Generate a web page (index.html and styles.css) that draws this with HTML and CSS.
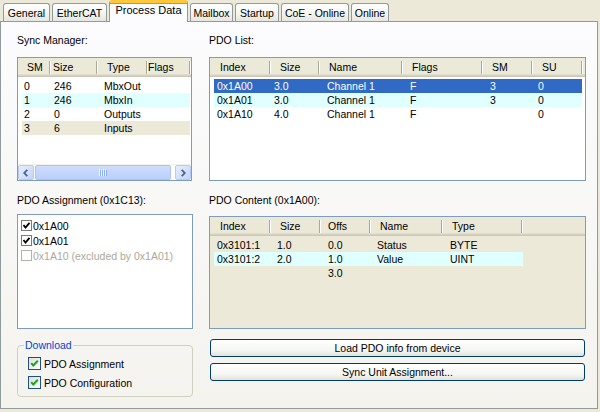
FILE: index.html
```html
<!DOCTYPE html>
<html>
<head>
<meta charset="utf-8">
<title>Process Data</title>
<link rel="stylesheet" href="styles.css">
</head>
<body>
<div class="window">
  <div class="tabs">
    <div class="tab w-general">General</div>
    <div class="tab w-ethercat">EtherCAT</div>
    <div class="tab active w-process">Process Data</div>
    <div class="tab w-mailbox">Mailbox</div>
    <div class="tab w-startup">Startup</div>
    <div class="tab w-coe">CoE - Online</div>
    <div class="tab w-online">Online</div>
  </div>
  <div class="panel">
    <div class="col col-left">
      <div class="label lbl-top">Sync Manager:</div>
      <div class="listbox sm">
        <div class="hdr">
          <div class="hc">SM</div><div class="hc">Size</div><div class="hc">Type</div><div class="hc">Flags</div>
        </div>
        <div class="rows">
          <div class="row"><span>0</span><span>246</span><span>MbxOut</span><span></span></div>
          <div class="row cyan"><span>1</span><span>246</span><span>MbxIn</span><span></span></div>
          <div class="row"><span>2</span><span>0</span><span>Outputs</span><span></span></div>
          <div class="row beige"><span>3</span><span>6</span><span>Inputs</span><span></span></div>
        </div>
        <div class="hscroll">
          <div class="sbtn">
            <svg width="16" height="16" viewBox="0 0 16 16"><path d="M9.5 4.5 L6 8 L9.5 11.5" fill="none" stroke="#4D6185" stroke-width="2"/></svg>
          </div>
          <div class="thumb">
            <svg width="8" height="7" viewBox="0 0 8 7"><path d="M0.5 0v7M2.5 0v7M4.5 0v7M6.5 0v7" stroke="#EEF3FE" stroke-width="1"/><path d="M1.5 1v7M3.5 1v7M5.5 1v7M7.5 1v7" stroke="#8CB0F8" stroke-width="1"/></svg>
          </div>
          <div class="track"></div>
          <div class="sbtn">
            <svg width="16" height="16" viewBox="0 0 16 16"><path d="M6.5 4.5 L10 8 L6.5 11.5" fill="none" stroke="#4D6185" stroke-width="2"/></svg>
          </div>
        </div>
      </div>

      <div class="label lbl-mid-left">PDO Assignment (0x1C13):</div>
      <div class="listbox assign">
        <div class="item">
          <svg class="lcb" width="11" height="11" viewBox="0 0 11 11"><rect x="0.5" y="0.5" width="10" height="10" fill="#fff" stroke="#7A7A7A"/><path d="M2.5 5 L4.5 7.5 L8.5 2.8" fill="none" stroke="#000" stroke-width="1.8"/></svg>
          <span>0x1A00</span>
        </div>
        <div class="item">
          <svg class="lcb" width="11" height="11" viewBox="0 0 11 11"><rect x="0.5" y="0.5" width="10" height="10" fill="#fff" stroke="#7A7A7A"/><path d="M2.5 5 L4.5 7.5 L8.5 2.8" fill="none" stroke="#000" stroke-width="1.8"/></svg>
          <span>0x1A01</span>
        </div>
        <div class="item disabled">
          <svg class="lcb" width="11" height="11" viewBox="0 0 11 11"><rect x="0.5" y="0.5" width="10" height="10" fill="#fff" stroke="#B5B2A6"/></svg>
          <span>0x1A10 (excluded by 0x1A01)</span>
        </div>
      </div>

      <fieldset class="group">
        <legend>Download</legend>
        <div class="chk first">
          <svg width="13" height="13" viewBox="0 0 13 13"><defs><linearGradient id="cbg" x1="0" y1="0" x2="1" y2="1"><stop offset="0" stop-color="#DCDCD7"/><stop offset="1" stop-color="#FFFFFF"/></linearGradient></defs><rect x="0.5" y="0.5" width="12" height="12" fill="url(#cbg)" stroke="#1C5180"/><path d="M3.2 6.2 L5.3 8.5 L9.8 3.8" fill="none" stroke="#21A121" stroke-width="2"/></svg>
          <span>PDO Assignment</span>
        </div>
        <div class="chk">
          <svg width="13" height="13" viewBox="0 0 13 13"><rect x="0.5" y="0.5" width="12" height="12" fill="url(#cbg)" stroke="#1C5180"/><path d="M3.2 6.2 L5.3 8.5 L9.8 3.8" fill="none" stroke="#21A121" stroke-width="2"/></svg>
          <span>PDO Configuration</span>
        </div>
      </fieldset>
    </div>

    <div class="col col-right">
      <div class="label lbl-top">PDO List:</div>
      <div class="listbox pdolist">
        <div class="hdr">
          <div class="hc">Index</div><div class="hc">Size</div><div class="hc">Name</div><div class="hc">Flags</div><div class="hc">SM</div><div class="hc">SU</div>
        </div>
        <div class="rows">
          <div class="row selected"><span>0x1A00</span><span>3.0</span><span>Channel 1</span><span>F</span><span>3</span><span>0</span></div>
          <div class="row cyan"><span>0x1A01</span><span>3.0</span><span>Channel 1</span><span>F</span><span>3</span><span>0</span></div>
          <div class="row"><span>0x1A10</span><span>4.0</span><span>Channel 1</span><span>F</span><span></span><span>0</span></div>
        </div>
      </div>

      <div class="label lbl-mid-right">PDO Content (0x1A00):</div>
      <div class="listbox content">
        <div class="hdr">
          <div class="hc">Index</div><div class="hc">Size</div><div class="hc">Offs</div><div class="hc">Name</div><div class="hc">Type</div>
        </div>
        <div class="rows">
          <div class="row"><span>0x3101:1</span><span>1.0</span><span>0.0</span><span>Status</span><span>BYTE</span></div>
          <div class="row cyan"><span>0x3101:2</span><span>2.0</span><span>1.0</span><span>Value</span><span>UINT</span></div>
          <div class="row"><span></span><span></span><span>3.0</span><span></span><span></span></div>
        </div>
      </div>

      <div class="buttons">
        <button class="btn">Load PDO info from device</button>
        <button class="btn">Sync Unit Assignment...</button>
      </div>
    </div>
  </div>
</div>
</body>
</html>
```

FILE: styles.css
```css
* { box-sizing: border-box; }

html, body {
  margin: 0;
  padding: 0;
}

body {
  width: 600px;
  height: 412px;
  overflow: hidden;
  background: #ECE9D8;
  font-family: "Liberation Sans", Arial, sans-serif;
  font-size: 10.5px;
  color: #000;
}

.window {
  width: 600px;
  height: 412px;
}

/* ---------- tabs ---------- */
.tabs {
  height: 21px;
  display: flex;
  align-items: flex-end;
  padding-left: 3px;
  gap: 2px;
  position: relative;
  z-index: 2;
}

.tab {
  height: 18px;
  border: 1px solid #919B9C;
  border-bottom: none;
  border-radius: 3px 3px 0 0;
  background: linear-gradient(#FFFFFF, #F3F3EF 60%, #E6E5DF);
  text-align: center;
  line-height: 18px;
  white-space: nowrap;
}

.tab.active {
  height: 22px;
  margin-bottom: -1px;
  border-top: 3px solid #FFC83C;
  box-shadow: inset 0 1px 0 #E68B2C;
  background: #FCFCFE;
  line-height: 15px;
  font-size: 11px;
}

.w-general { width: 47px; }
.w-ethercat { width: 55px; }
.w-process { width: 79px; }
.w-mailbox { width: 43px; }
.w-startup { width: 44px; }
.w-coe { width: 68px; }
.w-online { width: 38px; }

/* ---------- panel ---------- */
.panel {
  width: 598px;
  height: 388px;
  border: 1px solid #919B9C;
  background: linear-gradient(#FCFCFE, #F4F3EE);
  padding: 11px 0 0 16px;
  display: flex;
  gap: 16px;
  position: relative;
  z-index: 1;
}

.col {
  display: flex;
  flex-direction: column;
}

.col-left { width: 176px; }
.col-right { width: 377px; }

.label {
  height: 14px;
  line-height: 14px;
  white-space: nowrap;
}

.lbl-top { margin-bottom: 10px; }
.lbl-mid-left { margin-top: 12px; margin-bottom: 7px; }
.lbl-mid-right { margin-top: 12px; margin-bottom: 9px; }

/* ---------- list boxes ---------- */
.listbox {
  border: 1px solid #7F9DB9;
  background: #FFFFFF;
  display: flex;
  flex-direction: column;
  overflow: hidden;
}

.sm { height: 124px; width: 175px; }
.pdolist { height: 124px; width: 377px; }
.assign { height: 115px; padding-top: 3px; }
.content { height: 113px; width: 377px; background: #ECE9D8; }

.hdr {
  height: 19px;
  flex: none;
  display: grid;
  background: linear-gradient(to bottom, #EBEAD8 0, #EBEAD8 16px, #E2DECD 16px, #E2DECD 17px, #D6D2C2 17px, #D6D2C2 18px, #CBC7B8 18px);
}

.content .hdr {
  background: linear-gradient(to bottom, #EBE8D8 0, #EBE8D8 16px, #E2DECD 16px, #E2DECD 17px, #D6D2C2 17px, #D6D2C2 18px, #CBC7B8 18px);
}

.hc {
  height: 13px;
  margin-top: 3px;
  line-height: 13px;
  border-right: 1px solid #ACA899;
  box-shadow: 1px 0 0 #FFFFFF;
  padding-left: 10px;
  white-space: nowrap;
  overflow: hidden;
}

.rows {
  flex: 1;
  padding-top: 2px;
}

.row {
  display: grid;
  height: 14px;
  line-height: 14px;
  margin-left: 4px;
  padding-left: 3px;
  white-space: nowrap;
}

.row span { overflow: hidden; }

.row.cyan { background: #E0FFFF; }
.row.beige { background: #ECE9D8; }
.row.selected { background: #316AC5; color: #FFFFFF; }

/* sync manager columns */
.sm .hdr { grid-template-columns: 32px 47px 50px 43px; }
.sm .hc:nth-child(1) { padding-left: 9px; }
.sm .hc:nth-child(2) { padding-left: 3px; }
.sm .hc:nth-child(3) { padding-left: 10px; }
.sm .hc:nth-child(4) { padding-left: 1px; }
.sm .row { width: 168px; padding-left: 2px; grid-template-columns: 30px 50px 50px 1fr; }

/* pdo list columns */
.pdolist .hdr { grid-template-columns: 60px 49px 83px 80px 50px 50px 1fr; }
.pdolist .row { width: 368px; grid-template-columns: 57px 53px 83px 80px 48px 1fr; }

/* pdo content columns */
.content .hdr { grid-template-columns: 60px 50px 50px 72px 80px 1fr; }
.content .hc:nth-child(3) { padding-left: 8px; }
.content .row { width: 309px; grid-template-columns: 60px 51px 49px 73px 1fr; }

/* horizontal scrollbar */
.hscroll {
  height: 16px;
  flex: none;
  display: flex;
  background: #FEFEFB;
  border-top: 1px solid #F3F1E6;
}

.sbtn {
  width: 16px;
  height: 15px;
  border: 1px solid #B7CBF5;
  border-radius: 2px;
  background: linear-gradient(135deg, #E6EEFE, #C3D3FD);
  display: flex;
  align-items: center;
  justify-content: center;
  overflow: hidden;
}

.thumb {
  width: 136px;
  height: 15px;
  margin-left: 1px;
  border: 1px solid #ADC2F6;
  border-radius: 2px;
  background: linear-gradient(#CEDCFD, #BCD0FB);
  display: flex;
  align-items: center;
  justify-content: center;
}

.track { flex: 1; }

/* pdo assignment list */
.item {
  height: 15px;
  display: flex;
  align-items: center;
  padding-left: 3px;
  white-space: nowrap;
}

.item .lcb { margin-right: 1px; flex: none; }
.item.disabled { color: #ACA899; }

/* download group */
.group {
  margin: 10px 0 0 0;
  padding: 0 0 4px 6px;
  border: 1px solid #D0D0BF;
  border-radius: 4px;
  width: 176px;
}

.group legend {
  padding: 0 1px;
  color: #0046D5;
  line-height: 13px;
  height: 13px;
  font-size: 10.5px;
}

.chk {
  height: 19px;
  display: flex;
  align-items: center;
  padding-left: 4px;
  white-space: nowrap;
}

.chk.first { margin-top: 2px; }
.chk svg { margin-right: 3px; flex: none; }

/* buttons */
.buttons {
  margin-top: 10px;
  padding-left: 1px;
  display: flex;
  flex-direction: column;
  gap: 6px;
}

.btn {
  width: 375px;
  height: 18px;
  padding: 0;
  margin: 0;
  border: 1px solid #003C74;
  border-radius: 3px;
  background: linear-gradient(#FFFFFF, #F4F4F0 70%, #E3E0D5);
  font-family: "Liberation Sans", Arial, sans-serif;
  font-size: 10.5px;
  font-weight: normal;
  color: #000;
  line-height: 16px;
  text-align: center;
}
```
